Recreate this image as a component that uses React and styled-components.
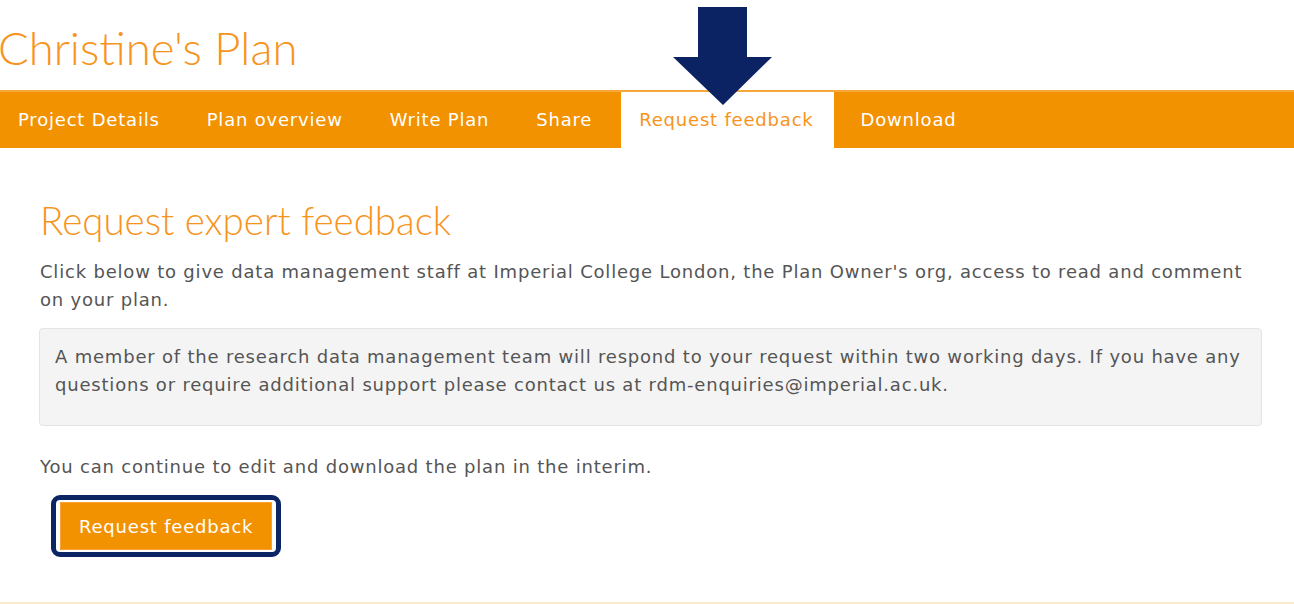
import React from 'react'
import styled, { createGlobalStyle } from 'styled-components'

const Global = createGlobalStyle`
  html, body {
    margin: 0;
    padding: 0;
    background: #fff;
  }
  body {
    font-family: "DejaVu Sans", Verdana, sans-serif;
    color: #555;
    overflow: hidden;
  }
`

const Page = styled.div`
  position: relative;
  width: 1294px;
  height: 604px;
  border-bottom: 2px solid #fce9cf;
  box-sizing: border-box;
`

const Title = styled.h1`
  margin: 0;
  padding: 21px 0 0 0;
  height: 90px;
  box-sizing: border-box;
  font-family: Lato, "Open Sans", sans-serif;
  font-weight: 300;
  font-size: 45.5px;
  line-height: 54px;
  color: #f7941d;
  text-indent: -2px;
`

const Nav = styled.nav`
  display: flex;
  align-items: stretch;
  height: 58px;
  background: #f39200;
  border-top: 2px solid #f6a83a;
  box-sizing: border-box;
`

const Tab = styled.a`
  display: flex;
  align-items: center;
  padding: 0 20px 2px 18px;
  margin-right: 9px;
  font-size: 18px;
  letter-spacing: 0.8px;
  color: ${p => (p.$active ? '#f7941d' : '#fff')};
  background: ${p => (p.$active ? '#fff' : 'transparent')};
  text-decoration: none;
  white-space: nowrap;
`

const Arrow = styled.svg`
  position: absolute;
  left: 673px;
  top: 7px;
`

const Main = styled.main`
  padding: 48px 32px 0 40px;
`

const Heading = styled.h2`
  margin: 0 0 14px 0;
  font-family: Lato, "Open Sans", sans-serif;
  font-weight: 300;
  font-size: 38.5px;
  line-height: 48px;
  color: #f7941d;
`

const Para = styled.p`
  margin: 0;
  font-size: 18px;
  letter-spacing: 0.8px;
  line-height: 28px;
  color: #555;
`

const Notice = styled.div`
  margin: 14px 0 27px -1px;
  padding: 14px 15px 26px 15px;
  background: #f4f4f4;
  border: 1px solid #e4e4e4;
  border-radius: 4px;
  font-size: 18px;
  letter-spacing: 0.8px;
  line-height: 28px;
  color: #555;
`

const Focus = styled.div`
  display: inline-flex;
  margin: 14px 0 0 11px;
  padding: 2px 4px;
  border: 5px solid #0b2565;
  border-radius: 9px;
`

const Button = styled.button`
  height: 48px;
  padding: 0 18px;
  border: 1px solid #f7a33a;
  background: #f39200;
  color: #fff;
  font-family: "DejaVu Sans", Verdana, sans-serif;
  font-size: 18px;
  letter-spacing: 0.8px;
  cursor: pointer;
`

const tabs = ['Project Details', 'Plan overview', 'Write Plan', 'Share', 'Request feedback', 'Download']

export default function App() {
  return (
    <Page>
      <Global />
      <Title>Christine's Plan</Title>
      <Nav>
        {tabs.map(t => (
          <Tab key={t} $active={t === 'Request feedback'}>{t}</Tab>
        ))}
      </Nav>
      <Arrow width="100" height="99" viewBox="0 0 100 99">
        <polygon points="25,0 74,0 74,50 99,50 50,98 0,50 25,50" fill="#0b2363" />
      </Arrow>
      <Main>
        <Heading>Request expert feedback</Heading>
        <Para>
          Click below to give data management staff at Imperial College London, the Plan Owner's org, access to read and comment on your plan.
        </Para>
        <Notice>
          A member of the research data management team will respond to your request within two working days. If you have any questions or require additional support please contact us at rdm-enquiries@imperial.ac.uk.
        </Notice>
        <Para>You can continue to edit and download the plan in the interim.</Para>
        <Focus>
          <Button>Request feedback</Button>
        </Focus>
      </Main>
    </Page>
  )
}
